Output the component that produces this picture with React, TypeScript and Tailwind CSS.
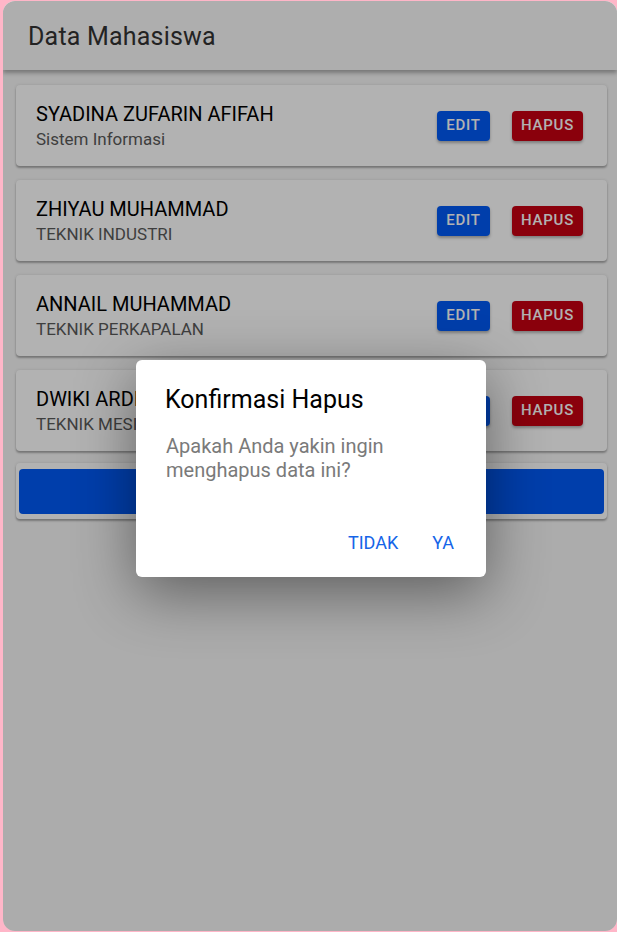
import { memo } from 'react';

type Mahasiswa = {
  nama: string;
  jurusan: string;
};

const DATA: Mahasiswa[] = [
  { nama: 'SYADINA ZUFARIN AFIFAH', jurusan: 'Sistem Informasi' },
  { nama: 'ZHIYAU MUHAMMAD', jurusan: 'TEKNIK INDUSTRI' },
  { nama: 'ANNAIL MUHAMMAD', jurusan: 'TEKNIK PERKAPALAN' },
  { nama: 'DWIKI ARDIANSYAH', jurusan: 'TEKNIK MESIN' },
];

const MahasiswaCard = memo(function MahasiswaCard({ item }: { item: Mahasiswa }) {
  return (
    <div className="ml-[13px] mr-[10px] flex h-[81px] items-center rounded-[4px] bg-white pl-5 pr-6 shadow-[0_2px_2px_rgba(0,0,0,0.28),0_0_3px_rgba(0,0,0,0.12)]">
      <div className="flex-1">
        <div className="text-[20px] leading-[24px] text-black">{item.nama}</div>
        <div className="mt-[3px] text-[17px] leading-[20px] text-[#5a5a5a]">{item.jurusan}</div>
      </div>
      <div className="flex items-center gap-[22px]">
        <button className="h-[30px] w-[53px] rounded-[4px] bg-[#005af5] text-[15px] font-medium tracking-[0.8px] text-white shadow-[0_2px_3px_rgba(0,0,0,0.3)]">
          EDIT
        </button>
        <button className="h-[30px] w-[71px] rounded-[4px] bg-[#c60012] text-[15px] font-medium tracking-[0.8px] text-white shadow-[0_2px_3px_rgba(0,0,0,0.3)]">
          HAPUS
        </button>
      </div>
    </div>
  );
});

export default function App() {
  return (
    <div className="flex h-[932px] w-[617px] bg-[#ffb6c8] pb-[1px] pl-[3px] pt-[1px] font-['Roboto','Liberation_Sans',sans-serif]">
      <div className="relative flex-1 overflow-hidden rounded-[12px] bg-[#f6f6f6]">
        {/* Header */}
        <div className="flex h-[69px] items-center bg-[#f9f9f9] pl-[25px] pt-[3px] shadow-[0_3px_4px_rgba(0,0,0,0.3)]">
          <h1 className="text-[25px] font-normal tracking-[0.2px] text-[#333]">Data Mahasiswa</h1>
        </div>

        {/* List */}
        <div className="flex flex-col gap-[14px] pt-[15px]">
          {DATA.map((m) => (
            <MahasiswaCard key={m.nama} item={m} />
          ))}
          <div className="ml-[13px] mr-[10px] -mt-[2px] rounded-[4px] bg-white px-[3px] pb-[5px] pt-[6px] shadow-[0_2px_2px_rgba(0,0,0,0.28),0_0_3px_rgba(0,0,0,0.12)]">
            <button className="h-[45px] w-full rounded-[4px] bg-[#005af5] text-[16px] font-medium tracking-[0.6px] text-white">
              TAMBAH DATA
            </button>
          </div>
        </div>

        {/* Overlay + dialog */}
        <div className="absolute inset-0 flex items-center justify-center bg-black/30 pl-[2px] pt-[4px]">
          <div className="w-[350px] rounded-[6px] bg-white shadow-[0_16px_60px_rgba(0,0,0,0.45)]">
            <div className="pl-[29px] pr-[29px] pt-[25px]">
              <h2 className="text-[25px] leading-[30px] text-black">Konfirmasi Hapus</h2>
              <p className="mt-[19px] pl-[1px] text-[20px] leading-[24px] text-[#7a7a7a]">
                Apakah Anda yakin ingin menghapus data ini?
              </p>
            </div>
            <div className="mt-[50px] flex justify-end gap-[34px] pb-[23px] pr-[32px]">
              <button className="text-[18px] leading-[22px] text-[#1565e8]">TIDAK</button>
              <button className="text-[18px] leading-[22px] text-[#1565e8]">YA</button>
            </div>
          </div>
        </div>
      </div>
    </div>
  );
}
